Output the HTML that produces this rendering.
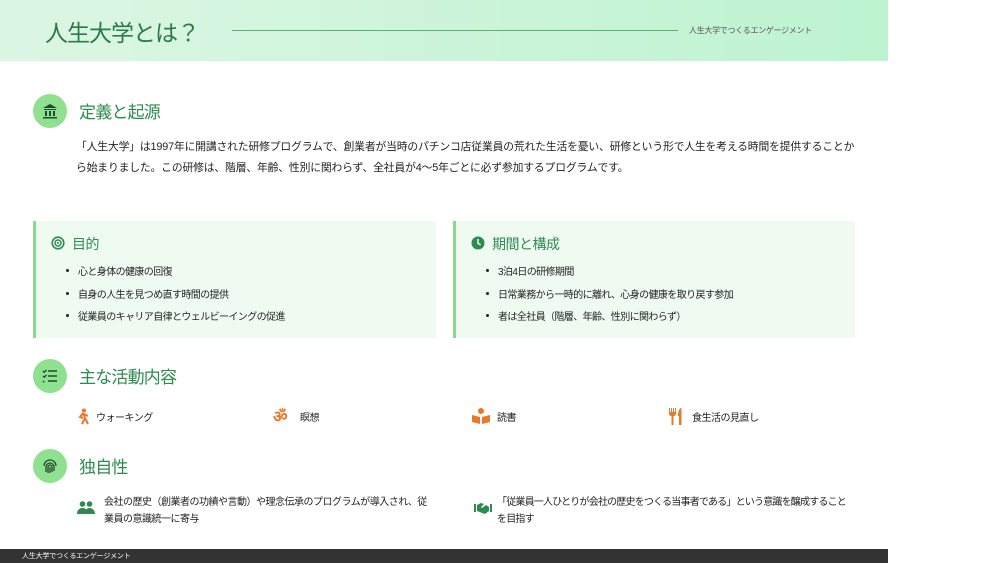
<!DOCTYPE html>
<html><head><meta charset="utf-8"><style>
*{margin:0;padding:0;box-sizing:border-box}
body{width:1000px;height:563px;background:#fff;position:relative;overflow:hidden;font-family:"Liberation Sans","Noto Sans CJK JP",sans-serif;color:#222}
.a{position:absolute;white-space:nowrap}
.hdr{position:absolute;left:0;top:0;width:888px;height:61px;background:linear-gradient(90deg,#dcf6e4,#bdf3d0)}
.circ{position:absolute;width:34px;height:34px;border-radius:50%;background:#8fe08f;display:flex;align-items:center;justify-content:center}
.h2{position:absolute;font-size:17px;letter-spacing:-0.8px;color:#2e8b50;white-space:nowrap}
.card{position:absolute;top:221px;height:117px;width:403px;background:#effbf1;border-left:3px solid #8ad98f}
.card h3{position:absolute;left:36px;top:13px;font-size:14px;font-weight:normal;color:#2e8b50;letter-spacing:-0.5px}
.card ul{position:absolute;left:30px;top:42px;list-style:none;font-size:10px;letter-spacing:-0.6px}
.card li{height:22.5px;position:relative;padding-left:12px}
.card li:before{content:"";position:absolute;left:0;top:6px;width:3px;height:3px;border-radius:50%;background:#222}
.t{font-size:10px;letter-spacing:-0.5px}
</style></head><body>
<div class="hdr"></div>
<div class="a" style="left:45px;top:14px;font-size:23px;letter-spacing:-1px;color:#2b7a48">人生大学とは？</div>
<div class="a" style="left:232px;top:30px;width:446px;height:1px;background:#4cba6a"></div>
<div class="a" style="left:689px;top:25px;font-size:8px;letter-spacing:-0.3px;color:#555">人生大学でつくるエンゲージメント</div>

<div class="circ" style="left:33px;top:94px"><svg width="16" height="16" viewBox="0 0 16 16"><path d="M8 1L1 5h14z M2 6h12v1H2z M3 8h2v5H3z M7 8h2v5H7z M11 8h2v5h-2z M1 14h14v1.5H1z" fill="#1f4a2c"/></svg></div>
<div class="h2" style="left:79px;top:98px">定義と起源</div>
<div class="a" style="left:76px;top:137px;font-size:10.8px;letter-spacing:-0.15px;line-height:21px">「人生大学」は1997年に開講された研修プログラムで、創業者が当時のパチンコ店従業員の荒れた生活を憂い、研修という形で人生を考える時間を提供することか<br>ら始まりました。この研修は、階層、年齢、性別に関わらず、全社員が4〜5年ごとに必ず参加するプログラムです。</div>

<div class="card" style="left:33px"><svg class="a" style="left:15px;top:15px" width="14" height="14" viewBox="0 0 14 14"><circle cx="7" cy="7" r="5.8" fill="none" stroke="#2e8b50" stroke-width="1.6"/><circle cx="7" cy="7" r="3" fill="none" stroke="#2e8b50" stroke-width="1.5"/><circle cx="7" cy="7" r="1" fill="#2e8b50"/></svg><h3>目的</h3>
<ul><li>心と身体の健康の回復</li><li>自身の人生を見つめ直す時間の提供</li><li>従業員のキャリア自律とウェルビーイングの促進</li></ul></div>
<div class="card" style="left:453px;width:402px"><svg class="a" style="left:15px;top:15px" width="14" height="14" viewBox="0 0 14 14"><circle cx="7" cy="7" r="6.5" fill="#2e8b50"/><path d="M7 3v4.3l2.6 1.6" stroke="#fff" stroke-width="1.4" fill="none"/></svg><h3>期間と構成</h3>
<ul><li>3泊4日の研修期間</li><li>日常業務から一時的に離れ、心身の健康を取り戻す参加</li><li>者は全社員（階層、年齢、性別に関わらず）</li></ul></div>

<div class="circ" style="left:33px;top:359px"><svg width="16" height="14" viewBox="0 0 16 14"><path d="M1 2l1.2 1.2L4.5 1 M1 7l1.2 1.2L4.5 6 M1 12l1.2 1.2" stroke="#1f4a2c" stroke-width="1.4" fill="none"/><path d="M6 2h9M6 7h9M6 12h9" stroke="#1f4a2c" stroke-width="1.6"/></svg></div>
<div class="h2" style="left:79px;top:363px">主な活動内容</div>

<svg class="a" style="left:76px;top:408px" width="14" height="17" viewBox="0 0 14 17"><circle cx="8" cy="2.5" r="2" fill="#e8782a"/><path d="M7 5L4 9l3 1M7 5l2 5-3 6M9 10l3 6M8 6l4 2" stroke="#e8782a" stroke-width="2" fill="none"/></svg>
<div class="a t" style="left:96px;top:409px">ウォーキング</div>
<div class="a" style="left:273px;top:405px;font-size:16px;font-weight:bold;color:#e8782a">ॐ</div>
<div class="a t" style="left:300px;top:409px">瞑想</div>
<svg class="a" style="left:472px;top:408px" width="18" height="16" viewBox="0 0 18 16"><circle cx="9" cy="3" r="3" fill="#e8782a"/><path d="M0 7l8 2v7L0 14z M18 7l-8 2v7l8-2z" fill="#e8782a"/></svg>
<div class="a t" style="left:497px;top:409px">読書</div>
<svg class="a" style="left:668px;top:408px" width="16" height="17" viewBox="0 0 16 17"><path d="M1 0v5c0 2 1 3 2.5 3v9h2V8C7 8 8 7 8 5V0H7v4H6V0H5v4H4V0H3v4H2V0z M11 17h2.5V0C11 0 10 4 10 8h1z" fill="#e8782a"/></svg>
<div class="a t" style="left:692px;top:409px">食生活の見直し</div>

<div class="circ" style="left:33px;top:449px"><svg width="16" height="16" viewBox="0 0 16 16" fill="none" stroke="#1f4a2c" stroke-width="1.3"><path d="M2 8a6 6 0 0 1 12 0M4 14V9a4 4 0 0 1 8 0v4M6 15V9a2 2 0 0 1 4 0v5M8 9v6"/></svg></div>
<div class="h2" style="left:79px;top:453px">独自性</div>

<svg class="a" style="left:77px;top:501px" width="18" height="13" viewBox="0 0 18 13"><circle cx="5.5" cy="3" r="2.8" fill="#2e8b50"/><circle cx="12.5" cy="3" r="2.8" fill="#2e8b50"/><path d="M0 13c0-4 2.5-6 5.5-6s5.5 2 5.5 6z M8 13c0-4 2-6 4.5-6S18 9 18 13z" fill="#2e8b50"/></svg>
<div class="a t" style="left:104px;top:494px;line-height:17px">会社の歴史（創業者の功績や言動）や理念伝承のプログラムが導入され、従<br>業員の意識統一に寄与</div>
<svg class="a" style="left:474px;top:502px" width="18" height="12" viewBox="0 0 18 12"><path d="M0 2h2v8H0z M16 2h2v8h-2z M3 3l4-2 3 1-3 3 1 1 4-3 3 2v4l-4 3-8-3z" fill="#2e8b50"/></svg>
<div class="a t" style="left:497px;top:494px;line-height:17px;letter-spacing:-0.8px">「従業員一人ひとりが会社の歴史をつくる当事者である」という意識を醸成すること<br>を目指す</div>

<div class="a" style="left:0;top:549px;width:888px;height:14px;background:#333"></div>
<div class="a" style="left:22px;top:551px;font-size:7px;letter-spacing:-0.2px;color:#fff">人生大学でつくるエンゲージメント</div>
</body></html>
